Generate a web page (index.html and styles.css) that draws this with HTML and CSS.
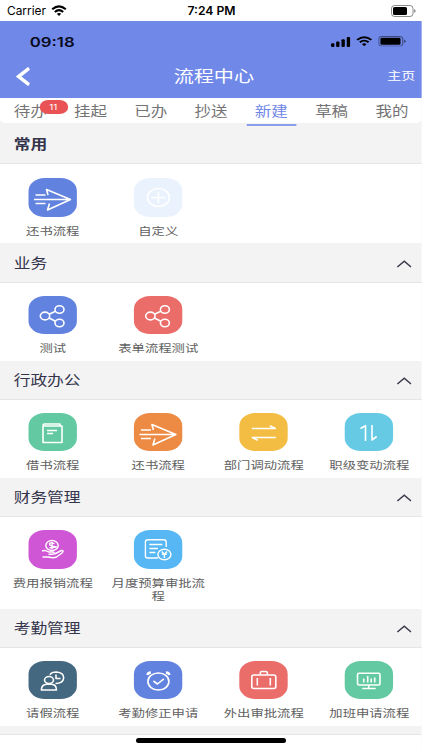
FILE: index.html
```
<!DOCTYPE html>
<html lang="zh-CN">
<head>
<meta charset="utf-8">
<title>流程中心</title>
<link rel="stylesheet" href="styles.css">
</head>
<body>
<svg class="defs" width="0" height="0">
  <symbol id="send" viewBox="0 0 48 38.5" preserveAspectRatio="none"><path d="M7 17H17M5.500 21.500H41M7 25.500H17M19.500 17L18 11.500L42 21.500L19 32L21 25.500"/></symbol>
  <symbol id="share" viewBox="0 0 48 38.5" preserveAspectRatio="none"><ellipse cx="16.500" cy="20" rx="4.700" ry="3.900"/><ellipse cx="31" cy="13.500" rx="4.500" ry="3.800"/><ellipse cx="31" cy="27" rx="4.500" ry="3.800"/><path d="M20.500 18.200L27 15.300M20.500 22L27 25.200"/></symbol>
  <symbol id="chevron" viewBox="0 0 15 8" preserveAspectRatio="none"><path d="M.6 7L7.500 1.200L14.400 7"/></symbol>
  <symbol id="wifi" viewBox="0 0 16 12" preserveAspectRatio="none"><path d="M1.200 4.500Q8-1.700 14.800 4.500M3.800 7.200Q8 3.400 12.200 7.200" fill="none" stroke="#000" stroke-width="2.100"/><path d="M5.800 9.200Q8 7.300 10.200 9.200L8 11.600Z"/></symbol>
  <symbol id="battery" viewBox="0 0 25 12" preserveAspectRatio="none"><rect x=".5" y=".5" width="21.500" height="11" rx="3" fill="none" stroke="#000" stroke-opacity=".45"/><path d="M23.200 4V8Q24.600 7.500 24.600 6T23.200 4" fill-opacity=".5"/></symbol>
</svg>

<div class="status">
  <div class="status-left"><span>Carrier</span><svg class="wifi"><use href="#wifi"/></svg></div>
  <span class="clock">7:24 PM</span>
  <div class="status-right"><svg class="battery" viewBox="0 0 25 12"><use href="#battery"/><rect x="2" y="2" width="14" height="8" rx="1.500"/></svg></div>
</div>

<div class="app">
  <header class="top">
    <div class="inner-status">
      <span class="inner-clock">09:18</span>
      <div class="signals">
        <svg class="bars" viewBox="0 0 19 11" preserveAspectRatio="none"><rect y="7" width="3.300" height="4" rx="1"/><rect x="5" y="5" width="3.300" height="6" rx="1"/><rect x="10.300" y="2.500" width="3.300" height="8.500" rx="1"/><rect x="15.500" width="3.300" height="11" rx="1"/></svg>
        <svg class="inner-wifi"><use href="#wifi"/></svg>
        <svg class="inner-battery" viewBox="0 0 25 12" preserveAspectRatio="none"><use href="#battery"/><rect x="2" y="2" width="18" height="8" rx="1.500"/></svg>
      </div>
    </div>
    <div class="nav">
      <svg class="back" viewBox="0 0 14 19" preserveAspectRatio="none"><path d="M12.800 1.300L2.300 9.500L12.800 17.700"/></svg>
      <h1>流程中心</h1>
      <span class="home">主页</span>
    </div>
  </header>

  <nav class="tabs">
    <span class="tab">待办<b class="badge">11</b></span>
    <span class="tab">挂起</span>
    <span class="tab">已办</span>
    <span class="tab">抄送</span>
    <span class="tab active">新建</span>
    <span class="tab">草稿</span>
    <span class="tab">我的</span>
  </nav>

  <section>
    <h2 class="first">常用</h2>
    <div class="grid">
      <div class="item"><svg class="tile blue"><use href="#send"/></svg><span>还书流程</span></div>
      <div class="item"><svg class="tile pale" viewBox="0 0 48 38.5" preserveAspectRatio="none"><ellipse cx="24.500" cy="19.500" rx="11" ry="9"/><path d="M17.500 19.500H31.500M24.500 13.700V25.300"/></svg><span>自定义</span></div>
    </div>
  </section>

  <section>
    <h2>业务<svg class="chevron"><use href="#chevron"/></svg></h2>
    <div class="grid">
      <div class="item"><svg class="tile blue"><use href="#share"/></svg><span>测试</span></div>
      <div class="item"><svg class="tile red"><use href="#share"/></svg><span>表单流程测试</span></div>
    </div>
  </section>

  <section>
    <h2>行政办公<svg class="chevron"><use href="#chevron"/></svg></h2>
    <div class="grid">
      <div class="item"><svg class="tile green" viewBox="0 0 48 38.5" preserveAspectRatio="none"><path d="M14.500 13V29.500H33.500V13H16Q14.500 13 14.500 12T16 11H31.500V13M18.500 17.500H28.500M18.500 20.500H24.500"/></svg><span>借书流程</span></div>
      <div class="item"><svg class="tile orange"><use href="#send"/></svg><span>还书流程</span></div>
      <div class="item"><svg class="tile yellow" viewBox="0 0 48 38.5" preserveAspectRatio="none"><path d="M12.500 15.500H36L30.500 12.800M36.500 24.500H13L18.500 27.200"/></svg><span>部门调动流程</span></div>
      <div class="item"><svg class="tile cyan" viewBox="0 0 48 38.5" preserveAspectRatio="none"><path d="M15.800 15.500L20.800 12.700V28M27.300 12V27L32 23.500"/></svg><span>职级变动流程</span></div>
    </div>
  </section>

  <section>
    <h2>财务管理<svg class="chevron"><use href="#chevron"/></svg></h2>
    <div class="grid tall">
      <div class="item"><svg class="tile purple fine" viewBox="0 0 48 38.5" preserveAspectRatio="none"><ellipse cx="23.500" cy="15.500" rx="6.200" ry="5"/><path d="M26 13.500Q21 12 21 14T26 16.500T21 17.700M23.500 12V19M13.500 21Q17 19.800 20 22H25Q27 24 24 24.300H20M26 24L33 20.500Q36 20.500 33.500 23L28 27Q25 28.500 20 27H14"/></svg><span>费用报销流程</span></div>
      <div class="item"><svg class="tile sky fine" viewBox="0 0 48 38.5" preserveAspectRatio="none"><path d="M24 28H14Q11.500 28 11.500 26V12Q11.500 9.800 14 9.800H30Q32.300 9.800 32.300 12V17M15.500 14.500H28.500M15.500 18.500H24M15.500 22.500H21.500"/><ellipse cx="30.500" cy="24.500" rx="6.500" ry="5.300"/><path d="M27.800 21.500L30.500 24.200L33.200 21.500M28 24.300H33M30.500 24.200V28"/></svg><span>月度预算审批流程</span></div>
    </div>
  </section>

  <section>
    <h2>考勤管理<svg class="chevron"><use href="#chevron"/></svg></h2>
    <div class="grid">
      <div class="item"><svg class="tile slate" viewBox="0 0 48 38.5" preserveAspectRatio="none"><ellipse cx="20.500" cy="19" rx="4.500" ry="3.500"/><path d="M12.800 29Q13 23.500 18 23.200H23Q28 23.500 28 29ZM21.500 13.800Q23 11 28 11Q35.200 11.500 35.200 17Q34.500 22.500 27 22.500M27.500 13.500V17.500H32"/></svg><span>请假流程</span></div>
      <div class="item"><svg class="tile blue" viewBox="0 0 48 38.5" preserveAspectRatio="none"><ellipse cx="24.500" cy="20.500" rx="10.500" ry="8.500"/><path d="M19.500 20L23.500 23L30 17.800"/><path d="M13.500 14Q14 11.500 17 11.500M32 11.500Q35 11.500 35.500 14" stroke-width="2.400"/></svg><span>考勤修正申请</span></div>
      <div class="item"><svg class="tile red" viewBox="0 0 48 38.5" preserveAspectRatio="none"><rect x="12.500" y="14" width="24" height="13.500" rx="2"/><path d="M21 13.500V11.500Q21 10.500 22.500 10.500H26.500Q28 10.500 28 11.500V13.500M18 17V24.500M31 17V24.500"/></svg><span>外出审批流程</span></div>
      <div class="item"><svg class="tile green" viewBox="0 0 48 38.5" preserveAspectRatio="none"><rect x="12.800" y="12.300" width="22.500" height="11.700" rx="1.500"/><path d="M24 24V27.500M17.500 27.500H31M19 17.500V21.500M23 15V21.500M26.500 17.500V21.500M30 16.500V21.500"/></svg><span>加班申请流程</span></div>
    </div>
  </section>
  <div class="next"></div>
</div>
<div class="indicator"></div>
</body>
</html>
```
FILE: styles.css
```
* { box-sizing: border-box; }
body {
  margin: 0;
  width: 422px;
  height: 750px;
  overflow: hidden;
  position: relative;
  background: #fff;
  font-family: "Liberation Sans", "Noto Sans CJK SC", sans-serif;
}
.defs { position: absolute; }
svg { display: block; flex: none; }

.status {
  height: 21px;
  display: grid;
  grid-template-columns: 1fr auto 1fr;
  align-items: center;
  padding: 1px 6px 0 7px;
  font: 12px/20px Inter, sans-serif;
  color: #000;
}
.status-left { display: flex; align-items: center; gap: 5px; font-size: 11.900px; }
.status-right { display: flex; justify-content: flex-end; }
.clock { font-weight: 600; font-size: 12.200px; }
.wifi { width: 16px; height: 11.500px; }
.battery { width: 25px; height: 12px; }

/* The app canvas is laid out narrow and widened to fill the screen. */
.app {
  width: 340.4px;
  transform: scaleX(1.24);
  transform-origin: 0 0;
  background: #f3f3f3;
}
.top { height: 77px; background: #7088e8; }
.inner-status {
  height: 40px;
  display: flex;
  align-items: center;
  justify-content: space-between;
  padding: 1px 12.5px 0 24px;
}
.inner-clock { font: 600 13.5px/16px Inter, sans-serif; color: #080b1c; }
.signals { display: flex; align-items: center; gap: 4.500px; }
.bars { width: 15.500px; height: 10px; }
.inner-wifi { width: 13.500px; height: 10.500px; }
.inner-battery { width: 22.500px; height: 10.500px; }
.nav {
  height: 30px;
  display: grid;
  grid-template-columns: 1fr auto 1fr;
  align-items: center;
  padding: 0 5.5px 0 12.5px;
  color: #fff;
}
.back { width: 11.500px; height: 19px; fill: none; stroke: #fff; stroke-width: 3.500; }
.nav h1 { margin: 0 0 0 -2.5px; font-size: 16.2px; line-height: 24px; font-weight: 400; }
.home { justify-self: end; font-size: 11.300px; line-height: 18px; }

.tabs {
  height: 25px;
  display: grid;
  grid-template-columns: repeat(7, 1fr);
  background: #fff;
  border-radius: 0 0 4px 4px;
}
.tab {
  position: relative;
  text-align: center;
  font-size: 13.300px;
  line-height: 27px;
  height: 28px;
  color: #747474;
}
.tab.active { color: #6f86e5; }
.tab.active::after {
  content: "";
  position: absolute;
  left: 4px;
  right: 4px;
  bottom: 0;
  height: 2px;
  background: #8a9eeb;
}
.badge {
  position: absolute;
  left: 31.500px;
  top: 2px;
  width: 23px;
  height: 14px;
  border-radius: 7px;
  background: #ea5356;
  color: #fff;
  font: 8px/15px Inter, sans-serif;
}

h2 {
  margin: 0;
  height: 40px;
  display: flex;
  align-items: center;
  justify-content: space-between;
  padding: 2px 8px 0 11px;
  border-bottom: 1px solid #e6e6e8;
  font-size: 13.5px;
  line-height: 20px;
  font-weight: 400;
  color: #34344c;
}
h2.first { height: 41px; padding-top: 4px; font-weight: 700; }
.chevron { width: 12px; height: 8px; fill: none; stroke: #3c3c4c; stroke-width: 1.600; }
.grid {
  height: 78px;
  display: grid;
  grid-template-columns: repeat(4, 1fr);
  background: #fff;
  padding-top: 12.500px;
}
.grid.tall { height: 92px; padding-top: 13px; }
section:nth-of-type(1) .grid { height: 79px; padding-top: 14px; }
section:nth-of-type(n+3) h2 { height: 39px; }
.item { display: flex; flex-direction: column; align-items: center; }
.item span {
  margin-top: 8px;
  width: 78px;
  text-align: center;
  font-size: 10.750px;
  line-height: 13.500px;
  color: #606060;
}
.tile {
  width: 38.700px;
  height: 38.500px;
  border-radius: 13px;
  fill: none;
  stroke: #fff;
  stroke-width: 1.600;
  stroke-linejoin: round;
}
.fine { stroke-width: 1.400; }
.blue { background: #6282df; }
.pale { background: #eaf2fd; }
.red { background: #ea6d69; }
.green { background: #62c9a2; }
.orange { background: #ed8a43; }
.yellow { background: #f3bc42; }
.cyan { background: #67cae5; }
.purple { background: #cf56d5; }
.sky { background: #56b7f4; }
.slate { background: #456881; }
.next { height: 24px; border-top: 8px solid #f3f3f3; background: #fff; box-shadow: inset 0 1px #e6e6e8; }

.indicator {
  position: absolute;
  left: 136px;
  top: 738px;
  width: 150px;
  height: 4.500px;
  border-radius: 2.500px;
  background: #000;
}
```
